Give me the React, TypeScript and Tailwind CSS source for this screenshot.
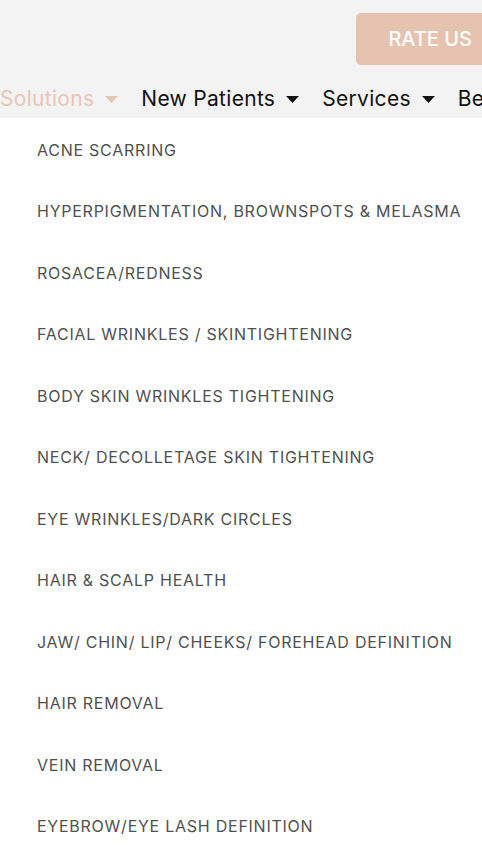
import React from 'react';

const items = [
  'ACNE SCARRING',
  'HYPERPIGMENTATION, BROWNSPOTS & MELASMA',
  'ROSACEA/REDNESS',
  'FACIAL WRINKLES / SKINTIGHTENING',
  'BODY SKIN WRINKLES TIGHTENING',
  'NECK/ DECOLLETAGE SKIN TIGHTENING',
  'EYE WRINKLES/DARK CIRCLES',
  'HAIR & SCALP HEALTH',
  'JAW/ CHIN/ LIP/ CHEEKS/ FOREHEAD DEFINITION',
  'HAIR REMOVAL',
  'VEIN REMOVAL',
  'EYEBROW/EYE LASH DEFINITION',
];

const Caret: React.FC<{ className?: string }> = ({ className }) => (
  <svg width="13" height="7" viewBox="0 0 13 7" className={'shrink-0 ' + (className ?? '')}>
    <path d="M0 0h13L6.5 7z" fill="currentColor" />
  </svg>
);

const navLinks = ['New Patients', 'Services'];

const App: React.FC = () => {
  return (
    <div
      className="w-[482px] h-[854px] overflow-hidden bg-white"
      style={{ fontFamily: 'Inter, "Liberation Sans", sans-serif' }}
    >
      {/* Header */}
      <div className="bg-[#f3f3f3] h-[118px] flex flex-col overflow-hidden">
        <div className="flex justify-end pt-[13px]">
          <button className="shrink-0 h-[52px] px-8 mr-[-22px] rounded-[5px] bg-[#e6c2b1] text-white text-[20px] font-medium">
            RATE US
          </button>
        </div>

        {/* Nav */}
        <div className="flex items-center whitespace-nowrap mt-[17px] text-[21px] leading-[34px] tracking-[0.3px]">
          <span className="text-[#e8c6b6]">Solutions</span>
          <Caret className="ml-[11px] mr-[23px] text-[#e8c6b6]" />
          {navLinks.map((n) => (
            <React.Fragment key={n}>
              <span className="text-[#111]">{n}</span>
              <Caret className="ml-[11px] mr-[23px] text-[#111]" />
            </React.Fragment>
          ))}
          <span className="text-[#111]">Before</span>
        </div>
      </div>

      {/* Dropdown */}
      <ul className="pl-[37px] pt-[1px]">
        {items.map((i) => (
          <li
            key={i}
            className="h-[61.5px] flex items-center text-[16px] tracking-[0.75px] text-[#505050] whitespace-nowrap"
          >
            {i}
          </li>
        ))}
      </ul>
    </div>
  );
};

export default App;
